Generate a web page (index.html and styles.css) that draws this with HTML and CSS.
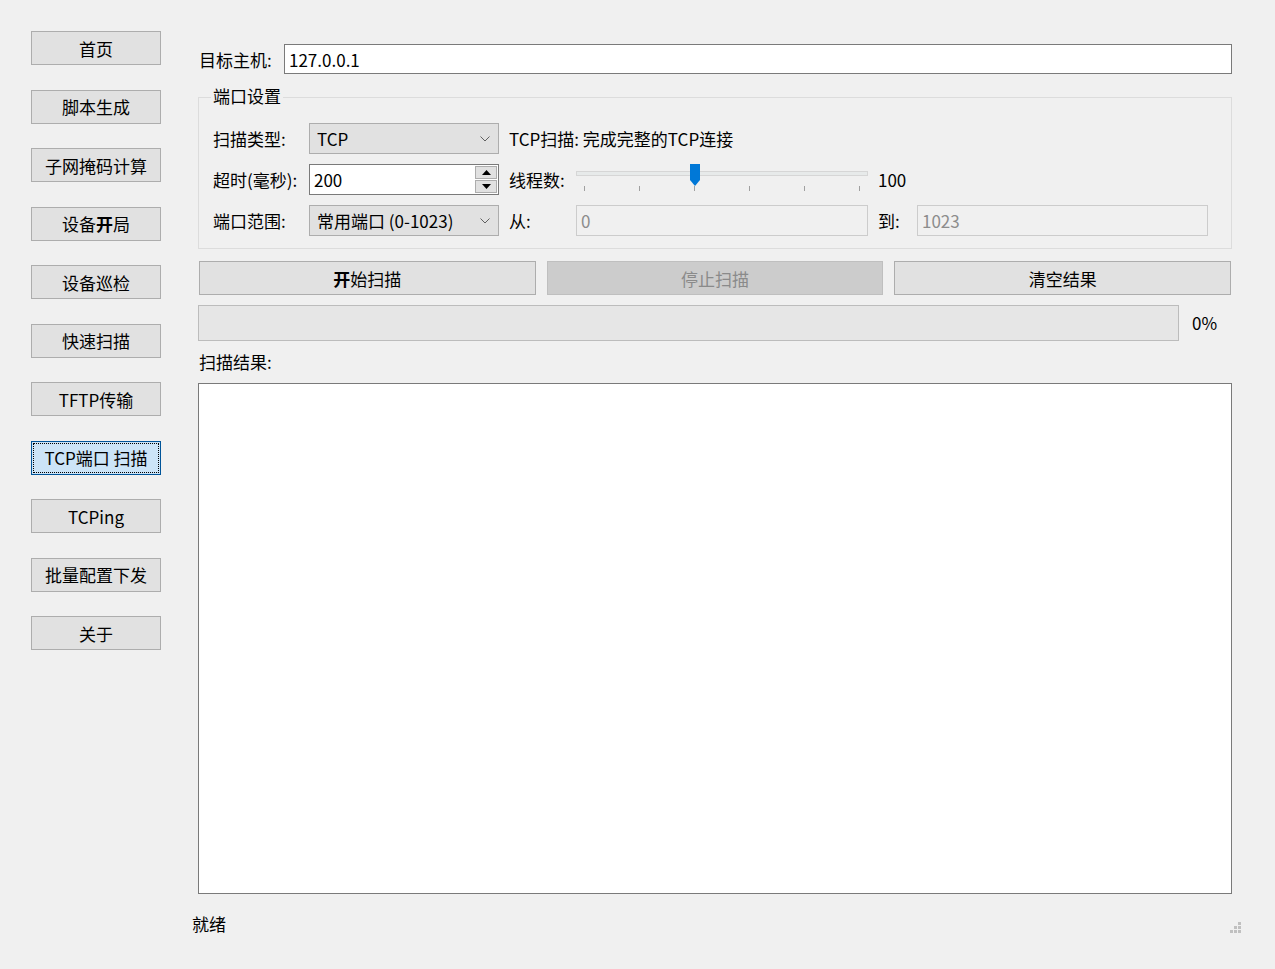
FILE: index.html
```html
<!DOCTYPE html>
<html lang="zh">
<head>
<meta charset="utf-8">
<title>TCP端口扫描</title>
<link rel="stylesheet" href="styles.css">
</head>
<body>
<div class="app">
  <nav class="sidebar">
    <button class="nav-btn">首页</button>
    <button class="nav-btn">脚本生成</button>
    <button class="nav-btn">子网掩码计算</button>
    <button class="nav-btn">设备<b>开</b>局</button>
    <button class="nav-btn">设备巡检</button>
    <button class="nav-btn">快速扫描</button>
    <button class="nav-btn">TFTP传输</button>
    <button class="nav-btn active">TCP端口 扫描</button>
    <button class="nav-btn">TCPing</button>
    <button class="nav-btn">批量配置下发</button>
    <button class="nav-btn">关于</button>
  </nav>

  <main class="main">
    <div class="host-row">
      <span class="host-label">目标主机:</span>
      <div class="text-input host-input">127.0.0.1</div>
    </div>

    <section class="group">
      <div class="group-title">端口设置</div>
      <div class="grid">
        <span class="lbl">扫描类型:</span>
        <div class="combo"><span>TCP</span><svg class="chev" width="10" height="6" viewBox="0 0 10 6"><path d="M0.5 0.5 L5 5 L9.5 0.5" fill="none" stroke="#606060" stroke-width="1"/></svg></div>
        <span class="desc">TCP扫描: 完成完整的TCP连接</span>

        <span class="lbl">超时(毫秒):</span>
        <div class="spin">
          <span>200</span>
          <div class="spin-btns">
            <div class="spin-btn"><svg width="9" height="5" viewBox="0 0 9 5"><path d="M0 5 L4.5 0 L9 5 Z" fill="#000"/></svg></div>
            <div class="spin-btn"><svg width="9" height="5" viewBox="0 0 9 5"><path d="M0 0 L4.5 5 L9 0 Z" fill="#000"/></svg></div>
          </div>
        </div>
        <span class="lbl2">线程数:</span>
        <div class="slider">
          <div class="groove"></div>
          <div class="handle" style="left: 113px"><svg width="12" height="23" viewBox="0 0 12 23"><path d="M1 0 H11 V16 L6 22 L1 16 Z" fill="#0078d7"/></svg></div>
          <div class="ticks"><i></i><i></i><i></i><i></i><i></i><i></i></div>
        </div>
        <span class="lbl3 span2">100</span>

        <span class="lbl">端口范围:</span>
        <div class="combo"><span>常用端口 (0-1023)</span><svg class="chev" width="10" height="6" viewBox="0 0 10 6"><path d="M0.5 0.5 L5 5 L9.5 0.5" fill="none" stroke="#606060" stroke-width="1"/></svg></div>
        <span class="lbl2">从:</span>
        <div class="text-input disabled">0</div>
        <span class="lbl3">到:</span>
        <div class="text-input disabled">1023</div>
      </div>
    </section>

    <div class="actions">
      <button class="btn"><b>开</b>始扫描</button>
      <button class="btn disabled-btn">停止扫描</button>
      <button class="btn">清空结果</button>
    </div>

    <div class="progress-row">
      <div class="progress"></div>
      <span class="pct">0%</span>
    </div>

    <div class="result-label">扫描结果:</div>
    <div class="results"></div>

    <div class="status-row">
      <span class="status">就绪</span>
      <svg class="grip" width="12" height="12" viewBox="0 0 12 12">
        <rect x="8" y="0" width="3" height="3" fill="#c0c0c0"/>
        <rect x="4" y="4" width="3" height="3" fill="#c0c0c0"/>
        <rect x="8" y="4" width="3" height="3" fill="#c0c0c0"/>
        <rect x="0" y="8" width="3" height="3" fill="#c0c0c0"/>
        <rect x="4" y="8" width="3" height="3" fill="#c0c0c0"/>
        <rect x="8" y="8" width="3" height="3" fill="#c0c0c0"/>
      </svg>
    </div>
  </main>
</div>
</body>
</html>
```

FILE: styles.css
```css
* { box-sizing: border-box; }
html, body {
  margin: 0;
  padding: 0;
  background: #f0f0f0;
  width: 1275px;
  height: 969px;
  overflow: hidden;
}
body {
  font-family: "Noto Sans CJK SC", "Noto Sans", sans-serif;
  font-size: 17px;
  color: #000;
}
b { font-weight: 700; }

.app {
  display: flex;
  align-items: flex-start;
}

.sidebar {
  display: flex;
  flex-direction: column;
  gap: 24.5px;
  padding: 31px 0 0 31px;
  width: 198px;
}
.nav-btn {
  width: 130px;
  height: 34px;
  padding: 0;
  background: #e1e1e1;
  border: 1px solid #adadad;
  font-family: inherit;
  font-size: 17px;
  color: #000;
  line-height: 1;
  text-align: center;
}
.nav-btn.active {
  background: #cce4f7;
  border: 1px solid #005499;
  outline: 1px dotted #000;
  outline-offset: -3px;
}

.main {
  width: 1034px;
  padding-top: 44px;
  display: flex;
  flex-direction: column;
}

.host-row {
  display: flex;
  align-items: center;
  height: 30px;
}
.host-label {
  width: 86px;
  padding-left: 1px;
}
.text-input {
  height: 30px;
  background: #fff;
  border: 1px solid #7a7a7a;
  display: flex;
  align-items: center;
  padding-left: 4px;
  line-height: 1;
}
.host-input { flex: 1; }

.group {
  position: relative;
  margin-top: 23px;
  border: 1px solid #dcdcdc;
  padding: 25px 0 12px 14px;
}
.group-title {
  position: absolute;
  top: -12px;
  left: 12px;
  padding: 0 2px;
  background: #f0f0f0;
  line-height: 20px;
}

.grid {
  display: grid;
  grid-template-columns: 96px 200px 67px 302px 39px 291px;
  grid-auto-rows: 31px;
  row-gap: 10px;
  align-items: center;
}
.lbl, .lbl2, .lbl3, .desc { line-height: 20px; }
.desc { grid-column: 3 / 7; }
.span2 { grid-column: 5 / 7; }

.combo {
  width: 190px;
  height: 31px;
  background: #e1e1e1;
  border: 1px solid #adadad;
  display: flex;
  align-items: center;
  justify-content: space-between;
  padding: 0 8px 0 7px;
  line-height: 1;
}
.chev { flex: none; }

.spin {
  width: 190px;
  height: 31px;
  background: #fff;
  border: 1px solid #7a7a7a;
  display: flex;
  align-items: center;
  justify-content: space-between;
  padding: 0 1px 0 4px;
  line-height: 1;
}
.spin-btns {
  display: flex;
  flex-direction: column;
  gap: 1px;
  height: 27px;
}
.spin-btn {
  width: 22px;
  height: 13px;
  background: #e1e1e1;
  border: 1px solid #adadad;
  display: flex;
  align-items: center;
  justify-content: center;
}

.slider {
  position: relative;
  width: 292px;
  height: 31px;
}
.groove {
  position: absolute;
  left: 0;
  right: 0;
  top: 7px;
  height: 5px;
  background: #e7eaea;
  border: 1px solid #d6d6d6;
}
.handle {
  position: absolute;
  top: 0;
  line-height: 0;
}
.ticks {
  position: absolute;
  left: 8px;
  right: 8px;
  top: 22px;
  height: 5px;
  display: flex;
  justify-content: space-between;
}
.ticks i {
  display: block;
  width: 1px;
  height: 5px;
  background: #a0a0a0;
}

.text-input.disabled {
  width: 292px;
  height: 31px;
  background: #f0f0f0;
  border: 1px solid #cccccc;
  color: #8c8c8c;
}
.lbl3 + .text-input.disabled { width: 291px; }

.actions {
  margin-top: 12px;
  display: grid;
  grid-template-columns: 1fr 1fr 1fr;
  column-gap: 11px;
  padding: 0 1px;
}
.btn {
  height: 34px;
  background: #e1e1e1;
  border: 1px solid #adadad;
  font-family: inherit;
  font-size: 17px;
  color: #000;
  line-height: 1;
  padding: 0;
}
.btn.disabled-btn {
  background: #cccccc;
  border-color: #bfbfbf;
  color: #8a8a8a;
}

.progress-row {
  margin-top: 10px;
  display: flex;
  align-items: center;
  height: 36px;
}
.progress {
  width: 981px;
  height: 36px;
  background: #e6e6e6;
  border: 1px solid #bcbcbc;
}
.pct {
  margin-left: 13px;
  line-height: 20px;
}

.result-label {
  margin-top: 11px;
  line-height: 20px;
  padding-left: 1px;
}
.results {
  margin-top: 11px;
  height: 511px;
  background: #fff;
  border: 1px solid #7a7a7a;
}

.status-row {
  margin-top: 20px;
  display: flex;
  align-items: center;
  justify-content: space-between;
  height: 20px;
}
.status {
  margin-left: -6px;
  line-height: 20px;
}
.grip {
  margin-right: -10px;
  margin-top: 8px;
}
```
